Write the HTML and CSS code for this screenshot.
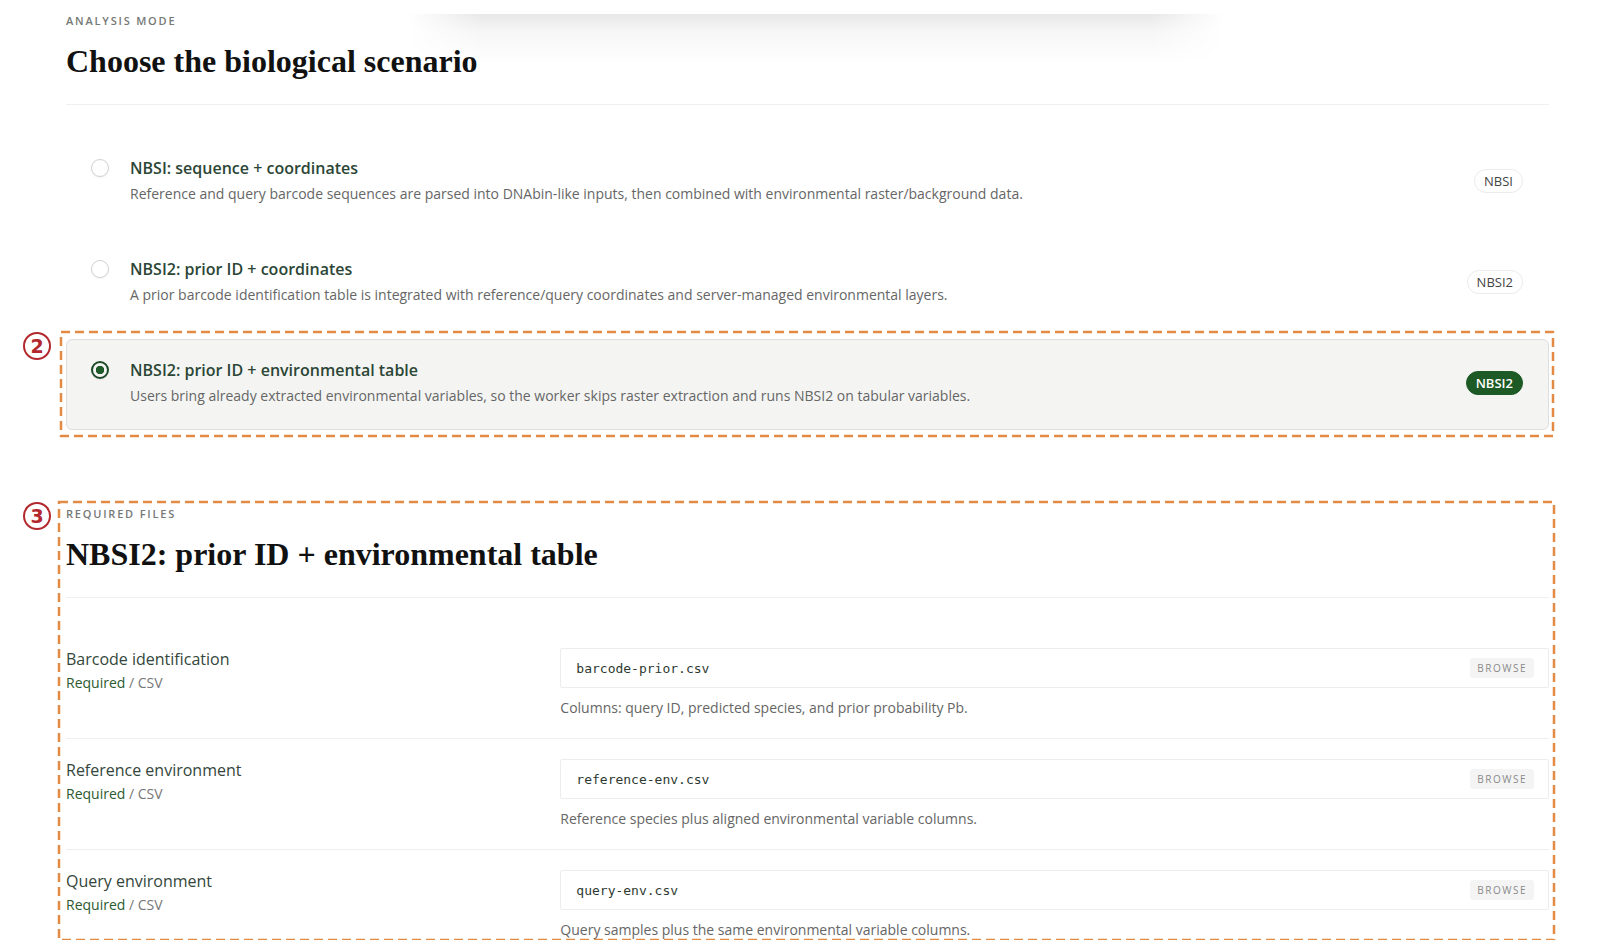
FILE: index.html
```html
<!DOCTYPE html>
<html lang="en">
<head>
  <meta charset="UTF-8">
  <title>Analysis mode</title>
  <link rel="stylesheet" href="styles.css">
</head>
<body>

<div class="top-shadow"></div>

<main class="page">

  <!-- Scenario picker -->
  <section class="panel">
    <div class="eyebrow">Analysis mode</div>
    <h2 class="panel-title">Choose the biological scenario</h2>

    <div class="options">
      <label class="option">
        <span class="radio"></span>
        <span class="option-text">
          <span class="option-title">NBSI: sequence + coordinates</span>
          <span class="option-desc">Reference and query barcode sequences are parsed into DNAbin-like inputs, then combined with environmental raster/background data.</span>
        </span>
        <span class="badge">NBSI</span>
      </label>

      <label class="option">
        <span class="radio"></span>
        <span class="option-text">
          <span class="option-title">NBSI2: prior ID + coordinates</span>
          <span class="option-desc">A prior barcode identification table is integrated with reference/query coordinates and server-managed environmental layers.</span>
        </span>
        <span class="badge">NBSI2</span>
      </label>

      <label class="option selected">
        <span class="radio"></span>
        <span class="option-text">
          <span class="option-title">NBSI2: prior ID + environmental table</span>
          <span class="option-desc">Users bring already extracted environmental variables, so the worker skips raster extraction and runs NBSI2 on tabular variables.</span>
        </span>
        <span class="badge">NBSI2</span>
        <svg class="mark-box mark-option"><rect x="0" y="0" width="100%" height="100%"></rect></svg>
        <span class="mark-num num-option">2</span>
      </label>
    </div>
  </section>

  <!-- Files for the chosen scenario -->
  <section class="panel files">
    <div class="eyebrow">Required files</div>
    <h2 class="panel-title">NBSI2: prior ID + environmental table</h2>

    <div class="file-list">
      <div class="file-row">
        <div class="file-label">
          <div class="file-name">Barcode identification</div>
          <div class="file-meta"><span class="req">Required</span> / CSV</div>
        </div>
        <div class="file-field">
          <div class="file-input">
            <span class="file-value">barcode-prior.csv</span>
            <span class="browse">Browse</span>
          </div>
          <div class="file-help">Columns: query ID, predicted species, and prior probability Pb.</div>
        </div>
      </div>

      <div class="file-row">
        <div class="file-label">
          <div class="file-name">Reference environment</div>
          <div class="file-meta"><span class="req">Required</span> / CSV</div>
        </div>
        <div class="file-field">
          <div class="file-input">
            <span class="file-value">reference-env.csv</span>
            <span class="browse">Browse</span>
          </div>
          <div class="file-help">Reference species plus aligned environmental variable columns.</div>
        </div>
      </div>

      <div class="file-row">
        <div class="file-label">
          <div class="file-name">Query environment</div>
          <div class="file-meta"><span class="req">Required</span> / CSV</div>
        </div>
        <div class="file-field">
          <div class="file-input">
            <span class="file-value">query-env.csv</span>
            <span class="browse">Browse</span>
          </div>
          <div class="file-help">Query samples plus the same environmental variable columns.</div>
        </div>
      </div>
    </div>

    <svg class="mark-box mark-files"><rect x="0" y="0" width="100%" height="100%"></rect></svg>
    <span class="mark-num num-files">3</span>
  </section>

</main>

</body>
</html>
```

FILE: styles.css
```css
/* Base */
body {
  margin: 0;
  background: #fff;
  font-family: 'Open Sans', 'Noto Sans', sans-serif;
  color: #333;
}

/* soft shadow cast by a header strip above the viewport */
.top-shadow {
  position: absolute;
  top: 14px;
  left: 408px;
  width: 816px;
  height: 50px;
  background: linear-gradient(rgba(0, 0, 0, 0.09), rgba(0, 0, 0, 0.035) 35%, rgba(0, 0, 0, 0));
  -webkit-mask-image: linear-gradient(to right, transparent, #000 9%, #000 91%, transparent);
  mask-image: linear-gradient(to right, transparent, #000 9%, #000 91%, transparent);
  pointer-events: none;
}

.page {
  padding: 14px 51px 0 66px;
}

/* Panel heading */
.eyebrow {
  font-size: 11px;
  line-height: 14px;
  font-weight: 600;
  letter-spacing: 1.8px;
  text-transform: uppercase;
  color: #767976;
}

.panel-title {
  margin: 15px 0 0;
  padding-bottom: 25px;
  border-bottom: 1px solid #f0f0f0;
  font-family: 'Liberation Serif', serif;
  font-size: 32px;
  line-height: 36px;
  font-weight: 700;
  color: #111;
}

/* Scenario options */
.options {
  display: flex;
  flex-direction: column;
  gap: 10px;
  margin-top: 32px;
}

.option {
  position: relative;
  display: flex;
  align-items: flex-start;
  gap: 21px;
  height: 91px;
  box-sizing: border-box;
  padding: 19px 25px 0 24px;
  border: 1px solid transparent;
  border-radius: 6px;
}

.option.selected {
  background: #f4f5f3;
  border-color: #dedfdd;
}

.radio {
  flex: none;
  width: 18px;
  height: 18px;
  margin-top: 2px;
  box-sizing: border-box;
  border: 1.5px solid #cfd2cf;
  border-radius: 50%;
  box-shadow: 0 1px 2px rgba(0, 0, 0, 0.06);
}

.selected .radio {
  border: 2px solid #1f4a27;
  background: radial-gradient(circle, #1f5a29 0 4px, transparent 4.5px);
}

.option-text {
  flex: 1;
  display: flex;
  flex-direction: column;
  gap: 5px;
}

.option-title {
  font-size: 16px;
  line-height: 22px;
  font-weight: 600;
  color: #2c4636;
}

.option-desc {
  font-size: 14px;
  line-height: 20px;
  color: #666;
}

.badge {
  align-self: center;
  margin-top: -22px;
  padding: 2px 9px;
  font-size: 13px;
  line-height: 18px;
  color: #444;
  background: #fff;
  border: 1px solid #ebebeb;
  border-radius: 12px;
}

.selected .badge {
  background: #1e5a25;
  border-color: #1e5a25;
  color: #fff;
  font-weight: 600;
}

/* Required files */
.files {
  position: relative;
  margin-top: 77px;
}

.file-list {
  margin-top: 30px;
}

.file-row {
  display: grid;
  grid-template-columns: 1fr 2fr;
  padding: 20px 0;
  border-bottom: 1px solid #efefef;
}

.file-row:last-child {
  border-bottom: none;
  padding-bottom: 0;
}

.file-name {
  font-size: 16px;
  line-height: 22px;
  color: #34463b;
}

.file-meta {
  margin-top: 3px;
  font-size: 14px;
  line-height: 20px;
  color: #777;
}

.req {
  color: #2b5a2f;
}

.file-input {
  display: flex;
  align-items: center;
  justify-content: space-between;
  height: 40px;
  box-sizing: border-box;
  padding: 0 14px 0 15px;
  border: 1px solid #ededed;
  border-radius: 2px;
}

.file-value {
  font-family: 'DejaVu Sans Mono', monospace;
  font-size: 13px;
  color: #2e3a31;
}

.browse {
  padding: 3px 7px;
  font-size: 10px;
  letter-spacing: 1.5px;
  text-transform: uppercase;
  color: #8a8a8a;
  background: #f4f4f4;
  border-radius: 3px;
}

.file-help {
  margin-top: 10px;
  font-size: 14px;
  line-height: 20px;
  color: #666;
}

/* Review annotations */
.mark-box {
  position: absolute;
  overflow: visible;
  pointer-events: none;
}

.mark-box rect {
  fill: none;
  stroke: #e38a45;
  stroke-width: 2.5;
  stroke-dasharray: 9 5;
}

.mark-option {
  top: -8px;
  left: -6px;
  width: calc(100% + 11px);
  height: calc(100% + 15px);
}

.mark-files {
  top: -5px;
  left: -7px;
  width: calc(100% + 12px);
  height: calc(100% + 5px);
}

.mark-num {
  position: absolute;
  width: 28px;
  height: 28px;
  box-sizing: border-box;
  border: 2px solid #b3282d;
  border-radius: 50%;
  font-family: 'DejaVu Sans', sans-serif;
  font-size: 19px;
  line-height: 24px;
  font-weight: 700;
  text-align: center;
  color: #b3282d;
}

.num-option {
  top: -8px;
  left: -44px;
}

.num-files {
  top: -5px;
  left: -43px;
}
```
